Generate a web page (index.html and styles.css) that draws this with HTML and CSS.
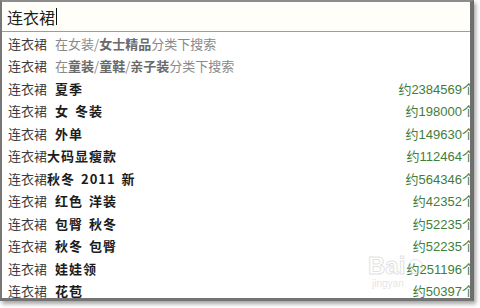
FILE: index.html
```html
<!DOCTYPE html>
<html lang="zh-CN">
<head>
<meta charset="utf-8">
<title>连衣裙</title>
<link rel="stylesheet" href="styles.css">
</head>
<body>
<div class="frame">
  <div class="input"><span class="typed">连衣裙</span><span class="caret"></span></div>
  <ul class="list">
    <li class="row"><span class="q">连衣裙</span><span class="hint sp">在女装/<b>女士精品</b>分类下搜索</span></li>
    <li class="row"><span class="q">连衣裙</span><span class="hint sp">在<b>童装</b>/<b>童鞋</b>/<b>亲子装</b>分类下搜索</span></li>
    <li class="row"><span class="q">连衣裙</span><b class="s sp">夏季</b><span class="n">约2384569个</span></li>
    <li class="row"><span class="q">连衣裙</span><b class="s sp">女 冬装</b><span class="n">约198000个</span></li>
    <li class="row"><span class="q">连衣裙</span><b class="s sp">外单</b><span class="n">约149630个</span></li>
    <li class="row"><span class="q">连衣裙</span><b class="s">大码显瘦款</b><span class="n">约112464个</span></li>
    <li class="row"><span class="q">连衣裙</span><b class="s">秋冬 2011 新</b><span class="n">约564346个</span></li>
    <li class="row"><span class="q">连衣裙</span><b class="s sp">红色 洋装</b><span class="n">约42352个</span></li>
    <li class="row"><span class="q">连衣裙</span><b class="s sp">包臀 秋冬</b><span class="n">约52235个</span></li>
    <li class="row"><span class="q">连衣裙</span><b class="s sp">秋冬 包臀</b><span class="n">约52235个</span></li>
    <li class="row"><span class="q">连衣裙</span><b class="s sp">娃娃领</b><span class="n">约251196个</span></li>
    <li class="row"><span class="q">连衣裙</span><b class="s sp">花苞</b><span class="n">约50397个</span></li>
  </ul>
  <div class="watermark"><span class="wm-big">Bai<span class="paw"></span></span><span class="wm-small">jingyan</span></div>
</div>
</body>
</html>
```

FILE: styles.css
```css
html, body {
  margin: 0;
  padding: 0;
  background: #ffffff;
}
body {
  width: 480px;
  height: 308px;
  overflow: hidden;
  font-family: "Noto Sans CJK SC", "Liberation Sans", sans-serif;
}
.frame {
  position: relative;
  width: 468px;
  height: 296px;
  background: #ffffff;
  border-top: 2px solid #8c8c8c;
  border-left: 2px solid #777777;
  border-right: 4px solid #6e6e6e;
  border-bottom: 3px solid #737373;
  box-shadow: 2px 3px 4px rgba(0, 0, 0, 0.35);
  overflow: hidden;
}
.input {
  height: 29px;
  border-bottom: 1px solid #9c9c9c;
  background: #fffef9;
  display: flex;
  align-items: center;
  padding-left: 5px;
}
.typed {
  font-size: 16px;
  color: #1e1e1e;
  line-height: 20px;
}
.caret {
  width: 1px;
  height: 17px;
  background: #111;
  margin-left: 1px;
}
.list {
  list-style: none;
  margin: 0;
  padding: 0;
}
.row {
  height: 22.5px;
  display: flex;
  align-items: center;
  padding-left: 6px;
  font-size: 13px;
  white-space: pre;
}
.q {
  color: #3c3c3c;
}
.sp {
  margin-left: 8px;
}
.s {
  color: #1c1c1c;
  font-weight: bold;
  letter-spacing: 1px;
  word-spacing: 2px;
}
.hint {
  color: #8a8a8a;
}
.hint b {
  color: #6a6a6a;
}
.n {
  margin-left: auto;
  margin-right: -5px;
  color: #3e7e3a;
  font-family: "Liberation Sans", "Noto Sans CJK SC", sans-serif;
  font-size: 13px;
}
.watermark {
  position: absolute;
  left: 366px;
  top: 252px;
  display: flex;
  flex-direction: column;
  font-family: "Liberation Sans", sans-serif;
  pointer-events: none;
}
.wm-big {
  display: flex;
  align-items: center;
  font-size: 24px;
  font-weight: bold;
  line-height: 24px;
  color: rgba(255, 255, 255, 0.5);
  -webkit-text-stroke: 1px rgba(190, 190, 190, 0.45);
}
.paw {
  display: inline-block;
  width: 13px;
  height: 13px;
  border-radius: 50%;
  border: 1px solid rgba(190, 190, 190, 0.45);
  margin-left: 3px;
}
.wm-small {
  font-size: 10px;
  line-height: 12px;
  padding-left: 4px;
  color: rgba(200, 200, 200, 0.5);
}
```
